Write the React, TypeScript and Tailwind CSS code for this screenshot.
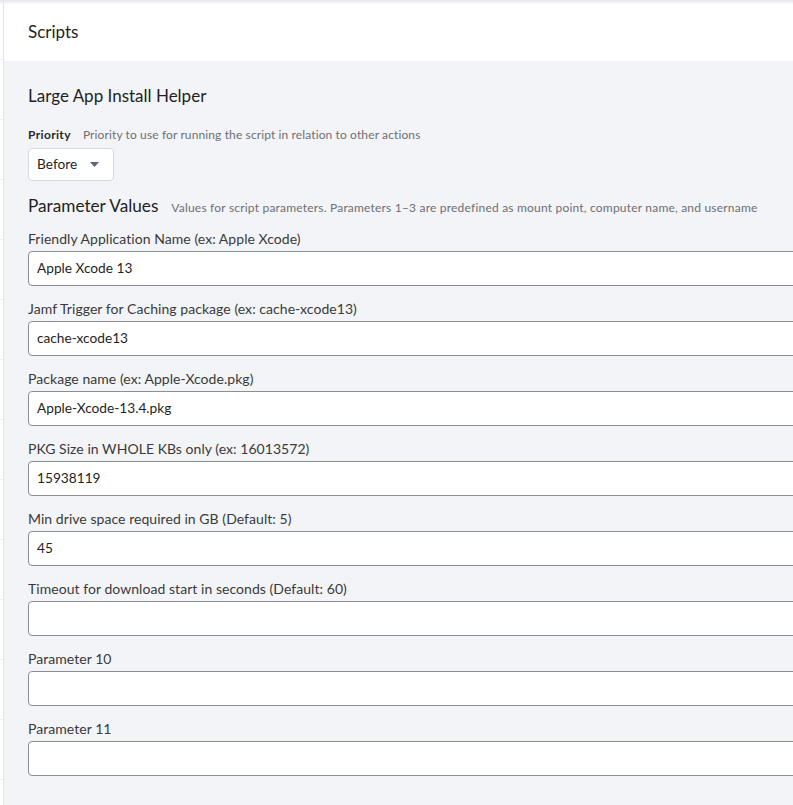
const fields = [
  { label: "Friendly Application Name (ex: Apple Xcode)", value: "Apple Xcode 13" },
  { label: "Jamf Trigger for Caching package (ex: cache-xcode13)", value: "cache-xcode13" },
  { label: "Package name (ex: Apple-Xcode.pkg)", value: "Apple-Xcode-13.4.pkg" },
  { label: "PKG Size in WHOLE KBs only (ex: 16013572)", value: "15938119" },
  { label: "Min drive space required in GB (Default: 5)", value: "45" },
  { label: "Timeout for download start in seconds (Default: 60)", value: "" },
  { label: "Parameter 10", value: "" },
  { label: "Parameter 11", value: "" },
];

function Field({ label, value }: { label: string; value: string }) {
  return (
    <div className="mb-[13px]">
      <div className="h-[20px] leading-[20px] text-[14px] tracking-[0.05px] text-[#3a3a3a]">{label}</div>
      <div className="mt-[2px] h-[35px] w-[800px] rounded-[4px] border border-[#8b8e93] bg-white px-2 flex items-center text-[13.7px] text-[#1f1f1f]">
        {value}
      </div>
    </div>
  );
}

export default function App() {
  return (
    <div
      className="relative flex h-[805px] w-[793px] overflow-hidden bg-white text-[#1f1f1f]"
      style={{ fontFamily: "Lato, 'Open Sans', sans-serif" }}
    >
      <div className="w-[4px] shrink-0 border-r border-[#e3e4e8] bg-white flex flex-col">
        {Array.from({ length: 14 }).map((_, i) => (
          <div key={i} className="h-[60px] shrink-0 border-b border-[#eceef1]" />
        ))}
      </div>
      <div className="flex-1 min-w-0 flex flex-col">
        <div className="h-[61px] shrink-0 flex items-center pt-[2px] px-6 bg-white text-[17px]">Scripts</div>
        <div className="flex-1 bg-[#f3f4f8] px-6 pt-[23px]">
          <div className="h-[24px] leading-[24px] text-[17px]">Large App Install Helper</div>
          <div className="mt-[19px] h-[16px] flex items-center gap-[12px]">
            <span className="text-[12px] tracking-[0.35px] font-bold text-[#2a2a2a]">Priority</span>
            <span className="text-[12px] tracking-[0.12px] text-[#6d6f73]">Priority to use for running the script in relation to other actions</span>
          </div>
          <div className="mt-[5px] h-[33px] w-[86px] rounded-[4px] border border-[#d6d8dc] bg-white flex items-center pl-[8px] text-[13.7px]">
            <span>Before</span>
            <svg className="ml-[13px]" width="9" height="5" viewBox="0 0 9 5">
              <path d="M0 0 L9 0 L4.5 5 Z" fill="#5b6478" />
            </svg>
          </div>
          <div className="mt-[13px] h-[24px] flex items-center gap-[13px]">
            <span className="text-[17.2px]">Parameter Values</span>
            <span className="text-[12px] tracking-[0.2px] text-[#6d6f73] pt-[3px]">
              Values for script parameters. Parameters 1–3 are predefined as mount point, computer name, and username
            </span>
          </div>
          <div className="mt-[11px]">
            {fields.map((f) => (
              <Field key={f.label} label={f.label} value={f.value} />
            ))}
          </div>
        </div>
      </div>
      <div className="absolute left-0 right-0 top-0 h-[5px] bg-gradient-to-b from-[#e6e7ec] to-transparent" />
    </div>
  );
}
